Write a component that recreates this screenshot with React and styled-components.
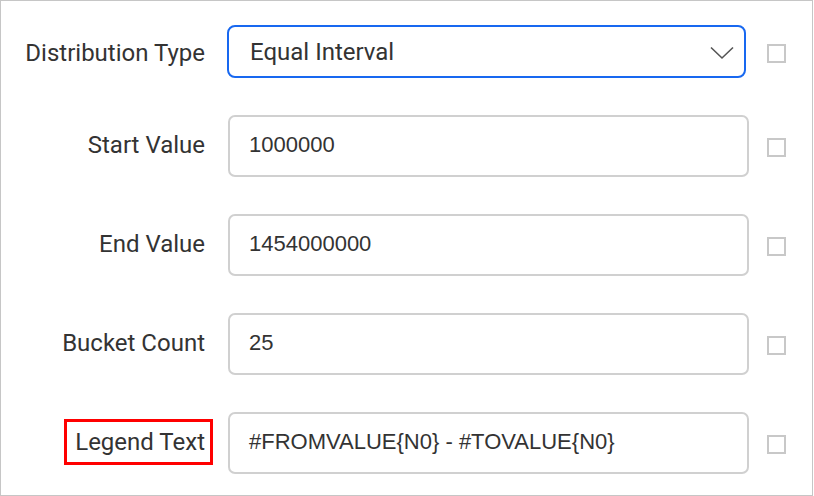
import React from "react";
import styled, { createGlobalStyle } from "styled-components";

const GlobalStyle = createGlobalStyle`
  html, body {
    margin: 0;
    padding: 0;
    background: #ffffff;
  }
`;

const Frame = styled.div`
  box-sizing: border-box;
  width: 813px;
  height: 496px;
  border: 1px solid #c6c6c6;
  background: #fff;
  padding-top: 24px;
  display: flex;
  flex-direction: column;
  gap: 37px;
`;

const Row = styled.div`
  display: flex;
  align-items: center;
  flex-shrink: 0;
  height: ${(p) => p.$h}px;
`;

const LabelCell = styled.div`
  width: 212px;
  flex-shrink: 0;
  display: flex;
  justify-content: flex-end;
  margin-top: ${(p) => p.$shift || 0}px;
`;

const Label = styled.span`
  font-family: Roboto, "Liberation Sans", sans-serif;
  font-size: 24px;
  color: #333;
  line-height: 1;
  padding: 8px 5px 8px 8px;
  border: ${(p) => (p.$marked ? "3px solid #ff0000" : "3px solid transparent")};
`;

const Field = styled.div`
  box-sizing: border-box;
  margin-left: ${(p) => (p.$active ? 14 : 15)}px;
  width: ${(p) => p.$w}px;
  height: 100%;
  border: 2px solid ${(p) => (p.$active ? "#1868f0" : "#d0d0d0")};
  border-radius: ${(p) => (p.$active ? 8 : 7)}px;
  display: flex;
  align-items: center;
  padding: 0 10px 0 ${(p) => (p.$active ? 21 : 19)}px;
  color: #333;
`;

const SelectText = styled.span`
  flex: 1;
  font-family: Roboto, "Liberation Sans", sans-serif;
  font-size: 24px;
`;

const InputText = styled.span`
  font-family: "Liberation Sans", Arial, sans-serif;
  font-size: 22px;
  margin-top: -2px;
`;

const Check = styled.div`
  box-sizing: border-box;
  width: 19px;
  height: 19px;
  border: 2px solid #c8c8c8;
  margin-left: ${(p) => p.$ml}px;
  margin-top: 3px;
`;

const Chevron = () => (
  <svg width="24" height="14" viewBox="0 0 24 14" style={{ marginTop: 2 }}>
    <path d="M1 1.5 L12 12 L23 1.5" fill="none" stroke="#555" strokeWidth="1.6" />
  </svg>
);

const rows = [
  { label: "Start Value", value: "1000000" },
  { label: "End Value", value: "1454000000" },
  { label: "Bucket Count", value: "25" },
  { label: "Legend Text", value: "#FROMVALUE{N0} - #TOVALUE{N0}", marked: true },
];

export default function App() {
  return (
    <>
      <GlobalStyle />
      <Frame>
        <Row $h={53}>
          <LabelCell $shift={2}>
            <Label>Distribution Type</Label>
          </LabelCell>
          <Field $w={519} $active>
            <SelectText>Equal Interval</SelectText>
            <Chevron />
          </Field>
          <Check $ml={21} />
        </Row>
        {rows.map((r) => (
          <Row key={r.label} $h={62}>
            <LabelCell $shift={-3}>
              <Label $marked={r.marked}>{r.label}</Label>
            </LabelCell>
            <Field $w={521}>
              <InputText>{r.value}</InputText>
            </Field>
            <Check $ml={18} />
          </Row>
        ))}
      </Frame>
    </>
  );
}
